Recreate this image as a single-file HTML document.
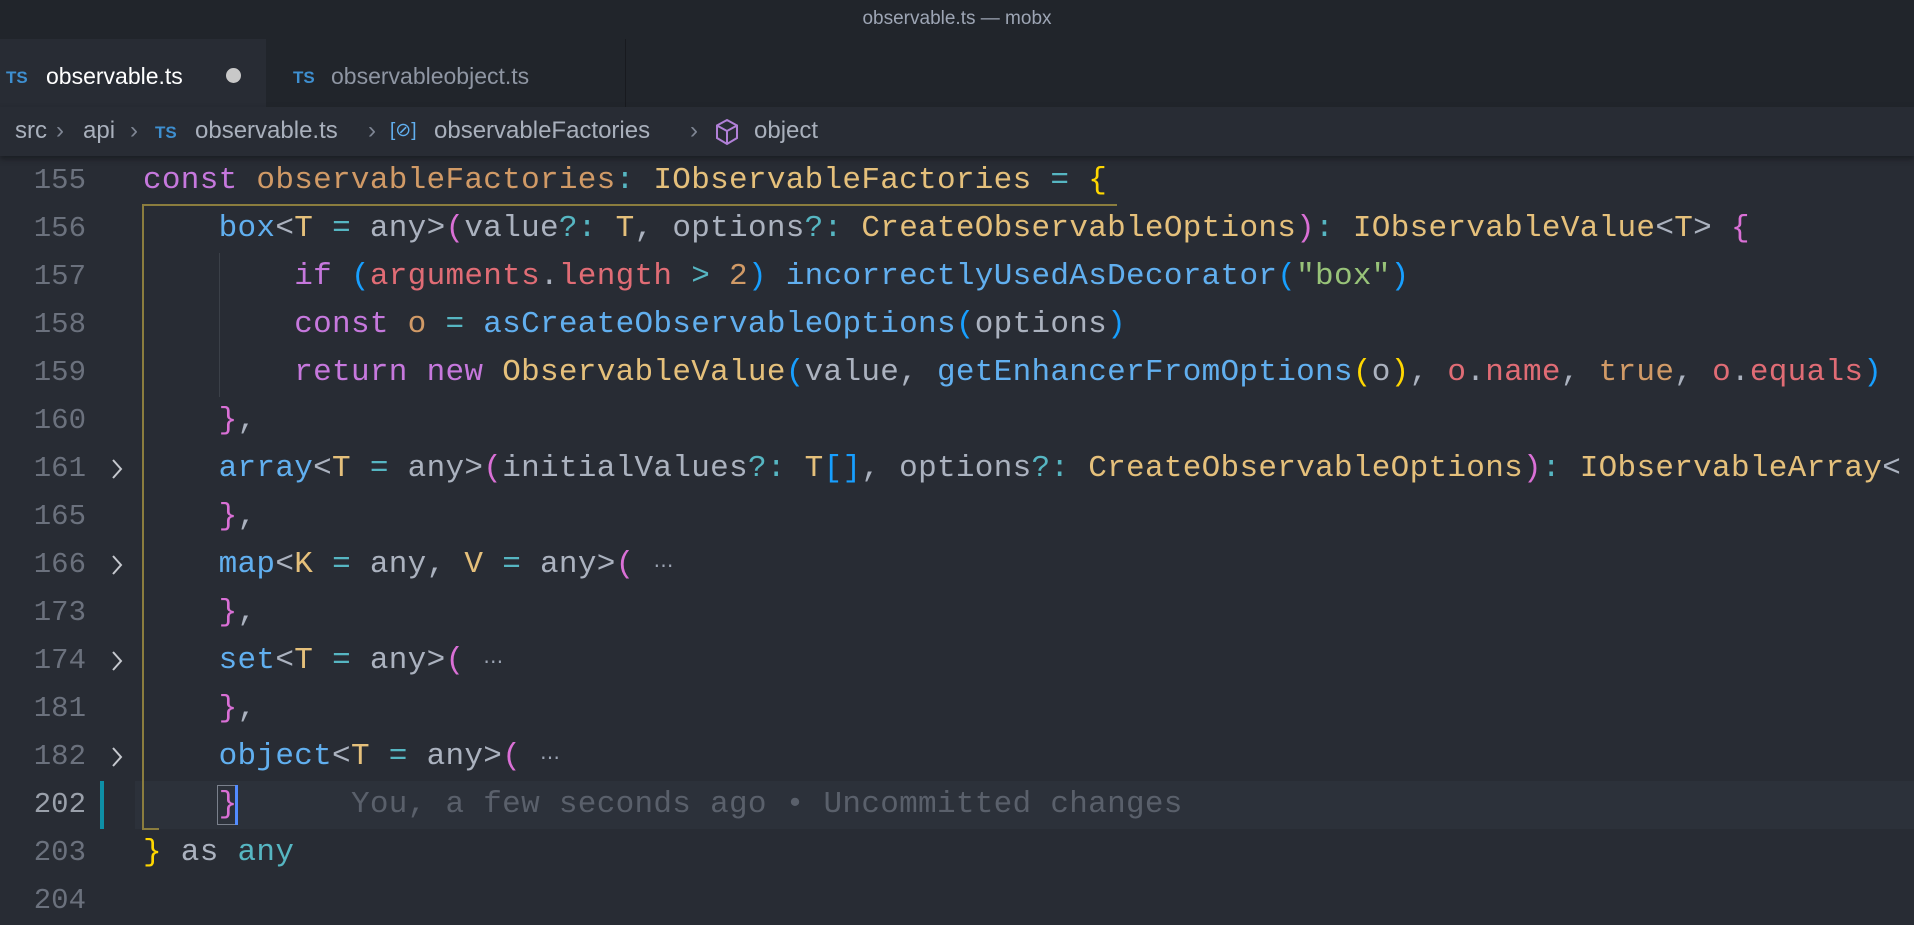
<!DOCTYPE html>
<html><head><meta charset="utf-8"><style>
*{margin:0;padding:0;box-sizing:border-box}
body{width:1914px;height:890px;background:#282c34;overflow:hidden;position:relative;font-family:"Liberation Sans",sans-serif}
#title{position:absolute;left:0;top:0;width:1914px;height:39px;background:#21252b;color:#9da5b4;font-size:19px;text-align:center;line-height:38px}
#tabs{position:absolute;left:0;top:39px;width:1914px;height:68px;background:#21252b}
.tab{position:absolute;top:0;height:68px;line-height:74px;font-size:23px}
.ts{color:#3e8fd0;font-weight:bold;font-size:17px;position:absolute;top:0}
#bc{position:absolute;left:0;top:107px;width:1914px;height:49px;background:#282c34;box-shadow:0 3px 5px #1b1e23;color:#a9b0bc;font-size:24px;line-height:48px;z-index:2}
#bc span{position:absolute;top:0}
.code{position:absolute;left:0;top:157px;width:1914px}
.row{position:absolute;left:0;height:48px;width:1914px}
.ln{position:absolute;right:1828px;top:0;line-height:48px;font-family:"Liberation Mono",monospace;font-size:29px;color:#6b717d;text-align:right}
.tx{position:absolute;left:143px;top:0;line-height:48px;font-family:"Liberation Mono",monospace;font-size:31px;letter-spacing:0.3px;white-space:pre;color:#abb2bf}
.k{color:#c678dd}.v{color:#d19a66}.y{color:#e5c07b}.f{color:#61afef}.r{color:#e06c75}.s{color:#98c379}.c{color:#56b6c2}.n{color:#d19a66}
.b1{color:#ffd700}.b2{color:#da70d6}.b3{color:#179fff}
.chev{position:absolute;left:110px;top:13px;width:14px;height:22px}
</style></head><body>
<div id="title">observable.ts — mobx</div>
<div id="tabs">
 <div class="tab" style="left:0;width:266px;background:#282c34;color:#fff"><span class="ts" style="left:6px;top:2px">TS</span><span style="position:absolute;left:46px">observable.ts</span><span style="position:absolute;left:226px;top:29px;width:15px;height:15px;border-radius:50%;background:#c8c8c8"></span></div>
 <div class="tab" style="left:266px;width:360px;color:#8f96a3;border-right:1px solid #181a1f"><span class="ts" style="left:27px;top:2px">TS</span><span style="position:absolute;left:65px">observableobject.ts</span></div>
</div>
<div id="bc">
 <span style="left:15px">src</span><span style="left:56px;color:#7f8694">›</span>
 <span style="left:83px">api</span><span style="left:130px;color:#7f8694">›</span>
 <span style="left:155px;color:#3e8fd0;font-weight:bold;font-size:17px;top:2px">TS</span>
 <span style="left:195px">observable.ts</span><span style="left:368px;color:#7f8694">›</span>
 <span style="left:390px;color:#61afef;font-size:19px">[⊘]</span>
 <span style="left:434px">observableFactories</span><span style="left:690px;color:#7f8694">›</span>
 <svg style="position:absolute;left:714px;top:11px" width="26" height="28" viewBox="0 0 26 28"><path d="M13 2 L23 7.5 L23 20 L13 26 L3 20 L3 7.5 Z M3 7.5 L13 13 L23 7.5 M13 13 L13 26" fill="none" stroke="#b180d7" stroke-width="2"/></svg>
 <span style="left:754px">object</span>
</div>

<div style="position:absolute;left:135px;top:781px;width:1779px;height:48px;background:#2c313a"></div>
<div style="position:absolute;left:142px;top:204px;width:975px;height:2px;background:#8b7d3e"></div>
<div style="position:absolute;left:142px;top:204px;width:2px;height:626px;background:#8b7d3e"></div>
<div style="position:absolute;left:142px;top:828px;width:17px;height:2px;background:#8b7d3e"></div>
<div style="position:absolute;left:219px;top:253px;width:1px;height:144px;background:#3b4048"></div>
<div style="position:absolute;left:100px;top:781px;width:4px;height:48px;background:#0e8fa6"></div>
<div style="position:absolute;left:217px;top:785px;width:19px;height:40px;border:1px solid #7a808c"></div>
<div style="position:absolute;left:235px;top:785px;width:3px;height:40px;background:#528bff"></div>

<div class="code">
<div class="row" style="top:0"><span class="ln">155</span><span class="tx"><span class="k">const</span> <span class="v">observableFactories</span><span class="c">:</span> <span class="y">IObservableFactories</span> <span class="c">=</span> <span class="b1">{</span></span></div>
<div class="row" style="top:48px"><span class="ln">156</span><span class="tx">    <span class="f">box</span>&lt;<span class="y">T</span> <span class="c">=</span> any&gt;<span class="b2">(</span>value<span class="c">?:</span> <span class="y">T</span>, options<span class="c">?:</span> <span class="y">CreateObservableOptions</span><span class="b2">)</span><span class="c">:</span> <span class="y">IObservableValue</span>&lt;<span class="y">T</span>&gt; <span class="b2">{</span></span></div>
<div class="row" style="top:96px"><span class="ln">157</span><span class="tx">        <span class="k">if</span> <span class="b3">(</span><span class="r">arguments</span>.<span class="r">length</span> <span class="c">&gt;</span> <span class="n">2</span><span class="b3">)</span> <span class="f">incorrectlyUsedAsDecorator</span><span class="b3">(</span><span class="s">"box"</span><span class="b3">)</span></span></div>
<div class="row" style="top:144px"><span class="ln">158</span><span class="tx">        <span class="k">const</span> <span class="v">o</span> <span class="c">=</span> <span class="f">asCreateObservableOptions</span><span class="b3">(</span>options<span class="b3">)</span></span></div>
<div class="row" style="top:192px"><span class="ln">159</span><span class="tx">        <span class="k">return</span> <span class="k">new</span> <span class="y">ObservableValue</span><span class="b3">(</span>value, <span class="f">getEnhancerFromOptions</span><span class="b1">(</span>o<span class="b1">)</span>, <span class="r">o</span>.<span class="r">name</span>, <span class="n">true</span>, <span class="r">o</span>.<span class="r">equals</span><span class="b3">)</span></span></div>
<div class="row" style="top:240px"><span class="ln">160</span><span class="tx">    <span class="b2">}</span>,</span></div>
<div class="row" style="top:288px"><span class="ln">161</span><svg class="chev" viewBox="0 0 14 22"><path d="M3 2 L11 11 L3 20" fill="none" stroke="#c5c8ce" stroke-width="2"/></svg><span class="tx">    <span class="f">array</span>&lt;<span class="y">T</span> <span class="c">=</span> any&gt;<span class="b2">(</span>initialValues<span class="c">?:</span> <span class="y">T</span><span class="b3">[]</span>, options<span class="c">?:</span> <span class="y">CreateObservableOptions</span><span class="b2">)</span><span class="c">:</span> <span class="y">IObservableArray</span>&lt;</span></div>
<div class="row" style="top:336px"><span class="ln">165</span><span class="tx">    <span class="b2">}</span>,</span></div>
<div class="row" style="top:384px"><span class="ln">166</span><svg class="chev" viewBox="0 0 14 22"><path d="M3 2 L11 11 L3 20" fill="none" stroke="#c5c8ce" stroke-width="2"/></svg><span class="tx">    <span class="f">map</span>&lt;<span class="y">K</span> <span class="c">=</span> any, <span class="y">V</span> <span class="c">=</span> any&gt;<span class="b2">(</span> <span style="color:#9da5b4;font-size:20px">⋯</span></span></div>
<div class="row" style="top:432px"><span class="ln">173</span><span class="tx">    <span class="b2">}</span>,</span></div>
<div class="row" style="top:480px"><span class="ln">174</span><svg class="chev" viewBox="0 0 14 22"><path d="M3 2 L11 11 L3 20" fill="none" stroke="#c5c8ce" stroke-width="2"/></svg><span class="tx">    <span class="f">set</span>&lt;<span class="y">T</span> <span class="c">=</span> any&gt;<span class="b2">(</span> <span style="color:#9da5b4;font-size:20px">⋯</span></span></div>
<div class="row" style="top:528px"><span class="ln">181</span><span class="tx">    <span class="b2">}</span>,</span></div>
<div class="row" style="top:576px"><span class="ln">182</span><svg class="chev" viewBox="0 0 14 22"><path d="M3 2 L11 11 L3 20" fill="none" stroke="#c5c8ce" stroke-width="2"/></svg><span class="tx">    <span class="f">object</span>&lt;<span class="y">T</span> <span class="c">=</span> any&gt;<span class="b2">(</span> <span style="color:#9da5b4;font-size:20px">⋯</span></span></div>
<div class="row" style="top:624px"><span class="ln" style="color:#9aa0aa">202</span><span class="tx">    <span class="b2">}</span>      <span style="color:#5a606b">You, a few seconds ago • Uncommitted changes</span></span></div>
<div class="row" style="top:672px"><span class="ln">203</span><span class="tx"><span class="b1">}</span> as <span class="c">any</span></span></div>
<div class="row" style="top:720px"><span class="ln">204</span></div>
</div>
</body></html>
